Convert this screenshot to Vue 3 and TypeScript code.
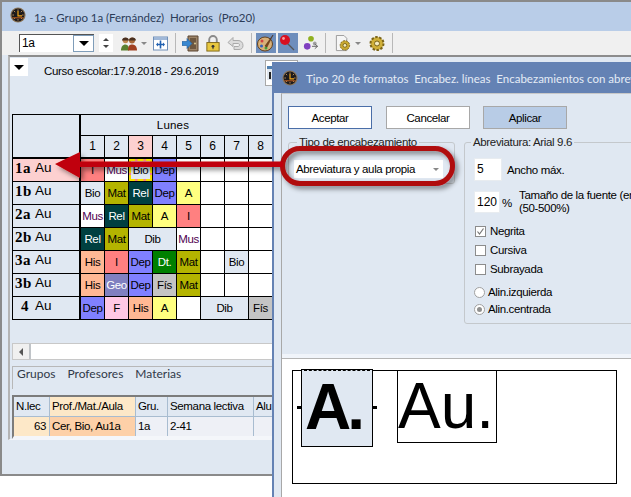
<script setup lang="ts">
interface Cell { t: string; c: string; span?: number }
const C: Record<string, string> = {
  I: 'red', Mus: 'white mus', Bio: 'pale', Dep: 'blue', A: 'yellow', Mat: 'olive', Rel: 'teal',
  His: 'peach', 'Dt.': 'green', Geo: 'slate', 'Fís': 'grey', F: 'pink', Dib: 'pale', '': 'white',
}
const mk = (list: (string | [string, number])[]): Cell[] =>
  list.map((x) => (typeof x === 'string' ? { t: x, c: C[x] } : { t: x[0], c: C[x[0]], span: x[1] }))
const rows = [
  { n: '1a', hi: true, cells: mk(['I', 'Mus', 'Bio', 'Dep', '', '', '', '']) },
  { n: '1b', hi: false, cells: mk(['Bio', 'Mat', 'Rel', 'Dep', 'A', '', '', '']) },
  { n: '2a', hi: false, cells: mk(['Mus', 'Rel', 'Mat', 'A', 'I', '', '', '']) },
  { n: '2b', hi: false, cells: mk(['Rel', 'Mat', ['Dib', 2], 'Mus', '', '', '']) },
  { n: '3a', hi: false, cells: mk(['His', 'I', 'Dep', 'Dt.', 'Mat', '', 'Bio', '']) },
  { n: '3b', hi: false, cells: mk(['His', 'Geo', 'Dep', 'Fís', 'Mat', '', '', '']) },
  { n: '4', hi: false, cells: mk(['Dep', 'F', 'His', 'A', '', ['Dib', 2], 'Fís']) },
]
const nums = [1, 2, 3, 4, 5, 6, 7, 8]
const ticks = [0, 45, 90, 135, 180, 225, 270, 315]
</script>

<template>
  <div class="screen">
    <!-- main window -->
    <section class="main">
      <header class="title">
        <svg class="clock" viewBox="0 0 20 20">
          <circle cx="10" cy="10" r="9.500" fill="#8a7458"/><circle cx="10" cy="10" r="8" fill="#1c1a1c"/>
          <path v-for="a in ticks" :key="a" d="M10 3v2" stroke="#d8a060" :transform="'rotate(' + a + ' 10 10)'"/>
          <path d="M10 5v6h5" stroke="#f4a818" stroke-width="1.500" fill="none"/><path d="M3 13.500h14" stroke="#c8601c" stroke-width="1.200"/>
        </svg>
        <span class="title-text">1a - Grupo 1a (Fernández)&nbsp; Horarios&nbsp; (Pro20)</span>
      </header>
      <div class="toolbar">
        <div class="combo"><span class="combo-v">1a</span><span class="combo-b"><i class="tri"></i></span></div>
        <div class="spin"><i class="up"></i><i class="down"></i></div>
        <svg class="ic w16" viewBox="0 0 16 16"><circle cx="4.500" cy="5" r="2.800" fill="#c08850"/><circle cx="11" cy="5" r="3" fill="#a86838"/><path d="M1 5c0-4 7-4 7 0zM8 5c0-4 7-4 7 0z" fill="#4a3020"/><path d="M0 15c0-4 2-6 4.500-6S8 11 8 15z" fill="#5a8030"/><path d="M7 15c0-4 1-6 4-6s5 2 5 6z" fill="#a04020"/></svg>
        <i class="mini"></i>
        <svg class="ic w15" viewBox="0 0 15 16"><rect x=".5" y="1.500" width="14" height="13" fill="#fff" stroke="#7090b8"/><path d="M1 1.500h13v3H1z" fill="#a0b8d8"/><path d="M7.500 5v8M4 9h7" stroke="#2060b0" stroke-width="1.600"/><path d="M3 9l2-2v4zM12 9l-2-2v4z" fill="#2060b0"/></svg>
        <i class="sep"></i>
        <svg class="ic w17" viewBox="0 0 17 16"><path d="M6 .5h10v15H6z" fill="#9c8468" stroke="#5a4430"/><path d="M8 2.500h6v11H8z" fill="#6e5840"/><circle cx="13" cy="8" r=".9" fill="#e8d8a0"/><path d="M0 6h5V3l5 5-5 5v-3H0z" fill="#3a88d0" stroke="#1c5a98" stroke-width=".6"/></svg>
        <svg class="ic w16 ml6" viewBox="0 0 16 18"><path d="M4 8V5a4 4 0 0 1 8 0v3" fill="none" stroke="#8a8a8a" stroke-width="2"/><rect x="1.500" y="8" width="13" height="9" fill="#e8c840" stroke="#806818"/><circle cx="8" cy="12" r="1.500" fill="#333"/><path d="M8 12v3" stroke="#333"/></svg>
        <svg class="ic w17 ml6" viewBox="0 0 17 14"><path d="M1 6l5-5v3h5c3 0 5 2 5 5s-2 4-4 4H7v-3h4c2 0 2-3 0-3H6v3z" fill="#dcdcdc" stroke="#aaa"/></svg>
        <i class="sep"></i>
        <span class="tool on"><svg viewBox="0 0 18 18"><ellipse cx="8" cy="10" rx="7.500" ry="7" fill="#d8b078" stroke="#604020"/><circle cx="5" cy="7" r="1.500" fill="#d04040"/><circle cx="4.500" cy="12" r="1.500" fill="#3060c0"/><circle cx="9" cy="14" r="1.500" fill="#40a040"/><path d="M16 1L8 12l2 1z" fill="#804818" stroke="#402410" stroke-width=".5"/></svg></span>
        <span class="tool on"><svg viewBox="0 0 18 18"><path d="M7 8l8 8" stroke="#555" stroke-width="1.200"/><circle cx="6" cy="6" r="5" fill="#d81020"/><circle cx="4.500" cy="4.500" r="1.400" fill="#f8a0a0"/></svg></span>
        <svg class="ic w16 ml5" viewBox="0 0 16 18"><circle cx="8" cy="4" r="3" fill="#90b020"/><circle cx="4" cy="12" r="3.500" fill="#8040c0"/><circle cx="12" cy="9" r="2" fill="#a0a0a0"/><path d="M9 12h6M12 9.500l3 2.500-3 2.500" stroke="#666" fill="none"/></svg>
        <i class="sep s2"></i>
        <svg class="ic w16 ml10" viewBox="0 0 16 18"><path d="M1 .5h8l3 3v13H1z" fill="#f6f6f6" stroke="#999"/><circle cx="10" cy="11" r="5" fill="#c8a830" stroke="#7a6418" stroke-dasharray="2 1"/><circle cx="10" cy="11" r="2" fill="#f4ecc0" stroke="#7a6418"/></svg>
        <i class="mini"></i>
        <svg class="ic w16 ml8" viewBox="0 0 16 16"><circle cx="8" cy="8" r="6.500" fill="#d0b038" stroke="#7a6418" stroke-dasharray="2.500 1.500" stroke-width="2"/><circle cx="8" cy="8" r="2.500" fill="#f4ecc0" stroke="#7a6418"/></svg>
        <i class="sep s3"></i>
      </div>
      <div class="content">
        <div class="course">
          <span class="drop"><i class="tri"></i></span>
          <span class="course-text">Curso escolar:17.9.2018 - 29.6.2019</span>
          <span class="mini-win"><svg viewBox="0 0 12 14"><rect width="12" height="14" fill="#dfe6ee"/><rect width="12" height="3" fill="#5080b0"/><path d="M2 6h2v7H2z" fill="#222"/></svg></span>
        </div>
        <div class="grid">
          <div class="corner"></div>
          <div class="day">Lunes</div>
          <div v-for="n in nums" :key="n" class="num" :class="{ 'num-hi': n === 3 }">{{ n }}</div>
          <template v-for="r in rows" :key="r.n">
            <div class="lab" :class="{ 'lab-hi': r.hi }"><b :class="{ 'b-one': r.n === '4' }">{{ r.n }}</b><span>Au</span></div>
            <div
              v-for="(c, i) in r.cells"
              :key="i"
              class="cell"
              :class="[c.c, { sel: r.n === '1a' && c.t === 'Bio' }]"
              :style="c.span ? { gridColumn: 'span ' + c.span } : undefined"
            >{{ c.t }}</div>
          </template>
        </div>
        <div class="scroll"><span class="scroll-b"><i class="left"></i></span></div>
        <nav class="tabs"><span>Grupos</span><span>Profesores</span><span>Materias</span></nav>
        <div class="lect">
          <div class="lect-row head">
            <span class="c1">N.lec</span><span class="c2 hl">Prof./Mat./Aula</span><span class="c3">Gru.</span><span class="c4">Semana lectiva</span><span class="c5">Alu</span>
          </div>
          <div class="lect-row body">
            <span class="c1 rt hl">63</span><span class="c2 hl2">Cer, Bio, Au1a</span><span class="c3">1a</span><span class="c4">2-41</span><span class="c5"></span>
          </div>
        </div>
      </div>
    </section>

    <!-- format dialog -->
    <section class="dialog">
      <header class="dlg-title">
        <svg class="clock" viewBox="0 0 20 20">
          <circle cx="10" cy="10" r="9.500" fill="#8a7458"/><circle cx="10" cy="10" r="8" fill="#1c1a1c"/>
          <path v-for="a in ticks" :key="a" d="M10 3v2" stroke="#d8a060" :transform="'rotate(' + a + ' 10 10)'"/>
          <path d="M10 5v6h5" stroke="#f4a818" stroke-width="1.500" fill="none"/><path d="M3 13.500h14" stroke="#c8601c" stroke-width="1.200"/>
        </svg>
        <span class="dlg-text">Tipo 20 de formatos&nbsp; Encabez. líneas&nbsp; Encabezamientos con abreviatura</span>
      </header>
      <div class="dlg-body">
        <div class="btns">
          <button class="btn primary">Aceptar</button>
          <button class="btn">Cancelar</button>
          <button class="btn apply">Aplicar</button>
        </div>
        <div class="groups">
          <fieldset class="g1">
            <legend>Tipo de encabezamiento</legend>
            <div class="select"><span>Abreviatura y aula propia</span><i class="mini"></i></div>
          </fieldset>
          <fieldset class="g2">
            <legend>Abreviatura: Arial 9.6</legend>
            <div class="f-row f1"><span class="inp w28">5</span><span class="lbl-a">Ancho máx.</span></div>
            <div class="f-row f2">
              <span class="inp w26">120</span><span class="pct">%</span>
              <span class="lbl-b">Tamaño de la fuente (en %)<br />(50-500%)</span>
            </div>
            <label class="chk"><i class="box"><svg viewBox="0 0 9 9"><path d="M1.500 4.500l2 2.500L7.500 1.500" fill="none" stroke="#777" stroke-width="1.200"/></svg></i>Negrita</label>
            <label class="chk c2r"><i class="box"></i>Cursiva</label>
            <label class="chk c2r"><i class="box"></i>Subrayada</label>
            <label class="rad r1"><i class="dot"></i>Alin.izquierda</label>
            <label class="rad r2"><i class="dot on"></i>Alin.centrada</label>
          </fieldset>
        </div>
        <div class="preview">
          <div class="frame">
            <div class="pv-a">
              <i class="tick tl"></i><i class="tick tr"></i>
              A.
            </div>
            <div class="pv-b">Au.</div>
          </div>
        </div>
      </div>
    </section>

    <!-- callout annotation -->
    <svg class="callout" width="631" height="497" viewBox="0 0 631 497">
      <defs>
        <filter id="sh" x="-10%" y="-50%" width="120%" height="220%"><feDropShadow dx="3" dy="3" stdDeviation="2.500" flood-color="#000" flood-opacity=".45"/></filter>
      </defs>
      <g filter="url(#sh)">
        <rect x="282.500" y="148.500" width="170" height="35" rx="17.500" ry="17.500" fill="none" stroke="#b00810" stroke-width="5"/>
        <path d="M55 164L80 152v9.500h203v5.500H80v11z" fill="#c00008"/>
      </g>
    </svg>
  </div>
</template>

<style>
html, body { margin: 0; padding: 0; overflow: hidden; background: #fff; }
</style>

<style scoped>
.screen { position: relative; width: 631px; height: 497px; overflow: hidden; background: #fff; font-family: "Liberation Sans", Arial, sans-serif; font-size: 11.500px; letter-spacing: -.35px; color: #000; }
.screen * { box-sizing: border-box; }
i { display: block; font-style: normal; }

/* main */
.main { width: 660px; height: 476px; border: 2px solid #8a8a8a; border-right: 0; background: #e0e8f2; display: flex; flex-direction: column; }
.title { height: 29px; background: #b9cde8; display: flex; align-items: center; padding: 0 0 0 8px; gap: 8px; flex: none; }
.title .clock { margin-top: -3px; }
.clock { width: 16px; height: 16px; flex: none; }
.title-text { font-family: Lato, sans-serif; font-size: 11.500px; color: #2c3c58; white-space: pre; letter-spacing: -.05px; padding-top: 2px; }
.toolbar { height: 24px; background: #f0f0f0; display: flex; align-items: center; padding-left: 17px; flex: none; }
.combo { width: 75px; height: 18px; background: #fff; display: flex; border-left: 1px solid #555; border-top: 1px solid #555; flex: none; }
.combo-v { flex: 1; padding-left: 2px; line-height: 16px; font-size: 12px; }
.combo-b { width: 21px; border: 1px solid #7f9db9; display: flex; align-items: center; justify-content: center; }
.tri { width: 0; height: 0; border: 5px solid transparent; border-top: 5px solid #000; border-bottom: 0; }
.spin { width: 14px; height: 18px; margin-left: 5px; background: #fff; display: flex; flex-direction: column; align-items: center; justify-content: center; gap: 4px; flex: none; }
.up { width: 0; height: 0; border: 3px solid transparent; border-bottom: 3px solid #444; border-top: 0; }
.down { width: 0; height: 0; border: 3px solid transparent; border-top: 3px solid #444; border-bottom: 0; }
.ic { flex: none; height: 17px; }
.w15 { width: 15px; margin-left: 6px; }
.w16 { width: 16px; margin-left: 8px; }
.w17 { width: 17px; margin-left: 6px; }
.ml5 { margin-left: 5px; }
.ml6 { margin-left: 6px; }
.ml8 { margin-left: 8px; }
.ml10 { margin-left: 9px; }
.mini { width: 0; height: 0; border: 3px solid transparent; border-top: 3px solid #888; border-bottom: 0; margin-left: 4px; flex: none; }
.sep { width: 1px; height: 20px; background: #b8b8b8; margin-left: 7px; flex: none; }
.s2 { margin-left: 6px; }
.tool { width: 20px; height: 20px; padding: 1px; display: block; margin-left: 2px; flex: none; }
.sep + .tool { margin-left: 4px; }
.tool.on { background: #6e8ebc; }
.tool svg { width: 18px; height: 18px; display: block; }

.content { height: 385px; margin-left: 6px; border-left: 2px solid #b4b4b4; border-top: 2px solid #8c8c8c; border-bottom: 1px solid #f4f6fa; display: flex; flex-direction: column; padding-left: 2px; flex: none; }
.course { height: 57px; margin-left: -2px; display: flex; align-items: flex-start; padding-top: 1px; flex: none; }
.drop { width: 18px; height: 18px; background: #fff; display: flex; align-items: center; justify-content: center; flex: none; }
.course-text { width: 221px; margin-left: 16px; margin-top: 7px; white-space: nowrap; flex: none; }
.mini-win { width: 33px; height: 26px; margin-top: 2px; background: #fff; border: 1px solid #a8a8a8; padding: 5px 0 0 1px; flex: none; }
.mini-win svg { display: block; width: 12px; height: 14px; }

/* timetable */
.grid { display: grid; grid-template-columns: 67px repeat(8, 23px) 40px; grid-template-rows: 20px 22px; grid-auto-rows: 22px; gap: 1px; background: #000; border: 1px solid #000; width: 330px; flex: none; }
.corner { grid-row: span 2; background: #e0e8f2; margin-right: 1px; margin-bottom: 1px; }
.day { grid-column: 2 / span 9; background: #e0e8f2; text-align: center; line-height: 20px; padding-right: 48px; letter-spacing: .2px; }
.num { background: #e0e8f2; text-align: center; line-height: 21px; margin-bottom: 1px; font-size: 12px; letter-spacing: 0; }
.num-hi { background: #fdd0d0; }
.lab { background: #e0e8f2; display: flex; align-items: flex-start; padding: 0 0 0 2px; margin-right: 1px; line-height: 18px; grid-column: 1; }
.lab b { font-family: "Liberation Serif", serif; font-size: 15px; width: 19px; letter-spacing: .4px; }
.lab .b-one { padding-left: 6px; }
.lab span { font-size: 13.500px; letter-spacing: 0; margin-left: 1px; }
.lab-hi { background: #fdd0d0; }
.cell { text-align: center; line-height: 22px; overflow: hidden; white-space: nowrap; }
.white { background: #fff; }
.mus { color: #500050; }
.pale { background: #e0e8f2; }
.red { background: #ff8080; }
.blue { background: #8080ff; }
.yellow { background: #ffff80; }
.olive { background: #b4b400; }
.teal { background: #004040; color: #fff; }
.peach { background: #ffb894; }
.green { background: #008000; color: #fff; }
.slate { background: #8080c0; color: #fff; }
.grey { background: #c4c4c4; }
.pink { background: #ffc8e4; }
.sel { border: 2px dashed #f4e000; background: linear-gradient(#e0e8f2, #e0e8f2) padding-box, #ff8080 border-box; line-height: 18px; }

.scroll { margin-top: 23px; height: 17px; width: 320px; background: #fff; border: 1px solid #c8c8c8; flex: none; }
.scroll-b { display: flex; width: 18px; height: 100%; background: #f0f0f0; border-right: 2px solid #c0c4c8; align-items: center; justify-content: center; }
.left { width: 0; height: 0; border: 4px solid transparent; border-right: 4px solid #555; border-left: 0; }
.tabs { height: 23px; margin-top: 6px; border-left: 1px solid #b8b8b8; border-top: 1px solid #b8b8b8; display: flex; gap: 12px; padding: 0 0 0 4px; flex: none; font-family: Lato, sans-serif; font-size: 12px; line-height: 13px; color: #303848; letter-spacing: 0; }
.lect { margin-top: 6px; width: 300px; height: 44px; border: 2px solid #7c7c7c; border-bottom: 3px solid #f4f6fa; border-right: 0; flex: none; }
.lect-row { display: flex; height: 19px; line-height: 18px; }
.lect-row span { border-right: 1px solid #a8bcd0; padding-left: 2px; flex: none; white-space: nowrap; }
.head { background: #e0e8f2; border-bottom: 1px solid #a8bcd0; height: 20px; }
.body { background: #eef0f6; }
.c1 { width: 36px; }
.c2 { width: 86px; }
.c3 { width: 32px; }
.c4 { width: 86px; }
.c5 { width: 40px; }
.rt { text-align: right; padding-right: 3px; }
.hl { background: #fde8c8; }
.hl2 { background: #fdd0a8; }

/* dialog */
.dialog { position: absolute; left: 272px; top: 62px; width: 460px; height: 435px; background: #e0e8f2; border-left: 2px solid #6482b4; display: flex; flex-direction: column; }
.dlg-title { height: 31px; background: #6482b4; display: flex; align-items: center; gap: 8px; padding-left: 8px; flex: none; }
.dlg-text { font-family: Lato, sans-serif; font-size: 11.500px; color: #e4ecf6; white-space: pre; letter-spacing: 0; padding-top: 2px; }
.dlg-body { flex: 1; margin-left: 7px; border-left: 1px solid #a8a8a8; border-top: 1px solid #c8c8c8; display: flex; flex-direction: column; min-height: 0; }
.btns { display: flex; gap: 14px; padding: 12px 0 0 6px; flex: none; }
.btn { width: 84px; height: 23px; background: #fff; border: 1px solid #a8a8a8; border-radius: 0; padding: 0; font: 11.500px "Liberation Sans", Arial, sans-serif; letter-spacing: -.35px; color: #000; }
.primary { border-color: #4a6ea8; }
.apply { background: #b8cce6; margin-left: -1px; }
.groups { display: flex; gap: 9px; padding: 6px 0 0 6px; height: 225px; flex: none; }
fieldset { margin: 0; padding: 0; min-width: 0; border: 1px solid #c4c8cc; border-radius: 3px; }
legend { padding: 0 2px; line-height: 14px; color: #222; white-space: nowrap; }
.g1 { width: 167px; height: 49px; padding: 11px 0 0 5px; }
.g1 legend { margin-left: 3px; }
.select { width: 149px; height: 18px; background: #fff; display: flex; align-items: center; justify-content: space-between; padding: 0 4px 0 2px; white-space: nowrap; }
.select .mini { margin: 0; }
.g2 { width: 260px; height: 189px; padding: 0 0 0 9px; flex: none; }
.g2 legend { margin-left: -3px; }
.f-row { display: flex; align-items: flex-start; }
.f1 { margin-top: 9px; height: 23px; }
.inp { display: block; background: #fff; height: 23px; line-height: 20px; padding-left: 2px; font-size: 12px; letter-spacing: 0; flex: none; border: 1px solid #e8ecf0; }
.w28 { width: 28px; }
.w26 { width: 26px; height: 22px; }
.lbl-a { margin-left: 5px; margin-top: 5px; line-height: 14px; white-space: nowrap; }
.f2 { margin-top: 10px; height: 33px; }
.pct { width: 10px; margin-left: 2px; margin-top: 6px; }
.lbl-b { margin-left: 7px; line-height: 13px; margin-top: -2px; white-space: nowrap; }
.chk { display: flex; align-items: center; height: 14px; gap: 4px; margin-left: 1px; line-height: 14px; }
.box { width: 11px; height: 11px; background: #fff; border: 1px solid #8c8c8c; flex: none; }
.box svg { display: block; width: 9px; height: 9px; }
.c2r { margin-top: 5px; }
.rad { display: flex; align-items: center; height: 14px; gap: 3px; line-height: 14px; }
.r1 { margin-top: 9px; }
.r2 { margin-top: 3px; }
.dot { width: 11px; height: 11px; border-radius: 50%; background: #fff; border: 1px solid #a0a0a0; position: relative; flex: none; }
.dot.on::after { content: ""; position: absolute; left: 2px; top: 2px; width: 5px; height: 5px; border-radius: 50%; background: #909090; }

.preview { flex: 1; border-top: 4px solid #f0f4fa; background: #fff; box-shadow: inset 0 1px 0 #b4b4b4; padding: 12px 0 0 10px; }
.frame { width: 325px; height: 114px; border: 1px solid #000; display: flex; align-items: flex-start; padding-left: 8px; }
.pv-a { position: relative; width: 72px; height: 78px; margin-top: -2px; background: #e0e8f2; border: 1px solid #000; font: bold 64px/74px "Liberation Sans", Arial, sans-serif; letter-spacing: -4px; padding-left: 3px; white-space: nowrap; flex: none; }
.pv-a::before { content: ""; position: absolute; left: 2px; right: 2px; top: 0; border-top: 1px dashed #000; }
.tick { position: absolute; top: 36px; width: 4px; height: 3px; background: #000; }
.tl { left: -5px; }
.tr { right: -5px; }
.pv-b { width: 100px; height: 73px; margin-left: 24px; margin-top: -1px; border: 1px solid #000; font: 64px/70px "Liberation Sans", Arial, sans-serif; letter-spacing: 0; white-space: nowrap; flex: none; }

.callout { position: absolute; left: 0; top: 0; pointer-events: none; }
</style>
